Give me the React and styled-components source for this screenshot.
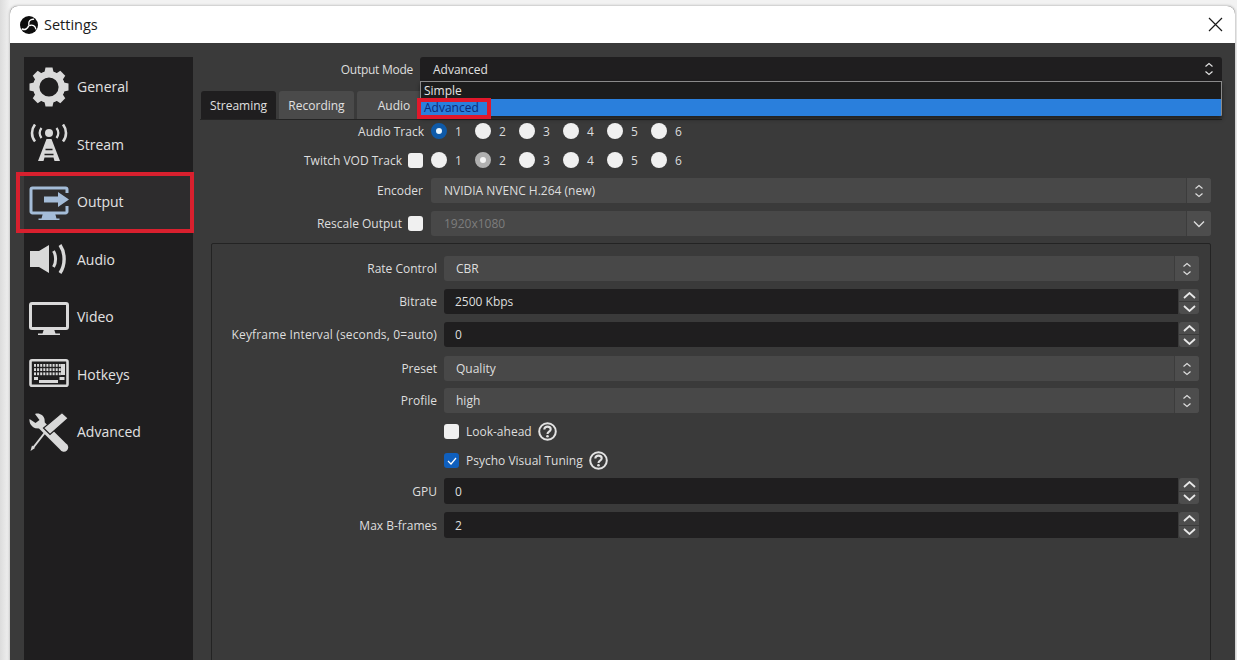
import React from "react";
import styled, { createGlobalStyle } from "styled-components";

const Global = createGlobalStyle`
  html, body { margin: 0; padding: 0; height: 660px; overflow: hidden; background: #f4f4f4; }
  #root { height: 660px; overflow: hidden; }
  * { box-sizing: border-box; }
`;

const FONT = `"Open Sans", "Noto Sans", sans-serif`;

const Desktop = styled.div`
  height: 660px;
  padding: 6px 2px 0 10px;
  font-family: ${FONT};
  background: linear-gradient(90deg, #dcdcdc 0, #f2f2f2 10px);
`;
const Window = styled.div`
  height: 700px;
  display: flex;
  flex-direction: column;
  background: #3a3a3a;
  border-radius: 8px 8px 0 0;
  box-shadow: 0 0 3px rgba(0, 0, 0, 0.35);
  overflow: hidden;
`;
const TitleBar = styled.div`
  height: 37px;
  flex: none;
  background: #fff;
  display: flex;
  align-items: center;
  padding: 0 12px 0 10px;
  gap: 6px;
  color: #1a1a1a;
  font-size: 14.5px;
`;
const TitleText = styled.span`
  flex: 1;
  line-height: 37px;
`;
const Body = styled.div`
  flex: 1;
  display: flex;
  gap: 7px;
  padding: 14px 13px 0 14px;
  min-height: 0;
`;
const Sidebar = styled.nav`
  width: 169px;
  flex: none;
  background: #1f1e1f;
  padding-top: 1px;
`;
const NavItem = styled.div`
  position: relative;
  height: 57.5px;
  display: flex;
  align-items: center;
  gap: 8px;
  padding-left: 5px;
  font-size: 14px;
  line-height: 20px;
  color: #e2e2e2;
  background: ${(p) => (p.$active ? "#2d2c2d" : "transparent")};
  svg { flex: none; }
`;
const NavLabel = styled.span`
  padding-top: 1px;
`;
const Highlight = styled.span`
  position: absolute;
  left: -8px;
  right: -1px;
  top: -1px;
  bottom: -2px;
  border: 4px solid #d8202e;
  pointer-events: none;
`;
const Main = styled.main`
  flex: 1;
  min-width: 0;
  display: flex;
  flex-direction: column;
`;
const OutputRow = styled.div`
  display: grid;
  grid-template-columns: 213px 1fr;
  gap: 7px;
  align-items: center;
  height: 24px;
`;
const Label = styled.label`
  display: flex;
  justify-content: flex-end;
  align-items: center;
  gap: 6px;
  padding-right: ${(p) => p.$inset || 0}px;
  font-size: 12px;
  letter-spacing: ${(p) => p.$spacing || 0}px;
  color: #dedede;
  white-space: nowrap;
`;
const ComboHolder = styled.div`
  position: relative;
  height: 24px;
`;
const ModeCombo = styled.div`
  height: 24px;
  background: #1f1e1f;
  border-radius: 3px 3px 0 0;
  display: flex;
  align-items: center;
  justify-content: space-between;
  padding: 0 8px 0 13px;
  font-size: 12px;
  color: #e0e0e0;
`;
const Dropdown = styled.div`
  position: absolute;
  top: 24px;
  left: 0;
  right: 0;
  height: 35px;
  border: 1px solid #8a8a8a;
  border-bottom-color: #555;
  background: #1c1c1c;
  box-shadow: 0 3px 4px rgba(0, 0, 0, 0.45);
  z-index: 3;
`;
const Option = styled.div`
  position: relative;
  height: 17px;
  line-height: 17px;
  padding-left: 3px;
  font-size: 12px;
  color: ${(p) => (p.$selected ? "#0b2a78" : "#e4e4e4")};
  background: ${(p) => (p.$selected ? "#2a7fdc" : "transparent")};
`;
const OptionMark = styled.span`
  position: absolute;
  left: -4px;
  top: -1px;
  width: 74px;
  height: 21px;
  border: 4px solid #e0182b;
`;
const TabBar = styled.div`
  display: flex;
  gap: 3px;
  height: 29px;
  margin-top: 10px;
  padding-left: 1px;
  border-bottom: 1px solid #242424;
`;
const Tab = styled.div`
  width: ${(p) => p.$w}px;
  height: 28px;
  border-radius: 3px 3px 0 0;
  display: flex;
  align-items: center;
  justify-content: center;
  font-size: 12px;
  color: #e0e0e0;
  background: ${(p) => (p.$active ? "#1f1e1f" : "#4a4a4a")};
`;
const Panel = styled.div`
  padding: 0 11px;
  display: flex;
  flex-direction: column;
`;
const TopRow = styled.div`
  display: grid;
  grid-template-columns: 214px 1fr;
  gap: 6px;
  align-items: center;
  height: ${(p) => p.$h}px;
  margin-bottom: ${(p) => p.$mb || 7}px;
`;
const Radios = styled.div`
  display: flex;
`;
const RadioItem = styled.div`
  width: 44px;
  flex: none;
  display: flex;
  align-items: center;
  gap: 8px;
  font-size: 12px;
  color: #dcdcdc;
`;
const Radio = styled.span`
  width: 16px;
  height: 16px;
  border-radius: 50%;
  flex: none;
  background: ${(p) => (p.$state === "on" ? "#e8f6ff" : p.$state === "disabled" ? "#f4f4f4" : "#f0f0f0")};
  border: ${(p) =>
    p.$state === "on" ? "5px solid #0f5aa8" : p.$state === "disabled" ? "5px solid #b0b0b0" : "0 solid transparent"};
`;
const Check = styled.span`
  width: 15px;
  height: 15px;
  flex: none;
  border-radius: 3px;
  display: inline-flex;
  align-items: center;
  justify-content: center;
  background: ${(p) => (p.$on ? "#0f5fbd" : "#f0f0f0")};
`;
const Select = styled.div`
  height: 25px;
  display: flex;
  border-radius: 3px;
  overflow: hidden;
  font-size: 12px;
  background: #484848;
  color: ${(p) => (p.$disabled ? "#7d7d7d" : "#dedede")};
`;
const Value = styled.div`
  flex: 1;
  display: flex;
  align-items: center;
  padding-left: ${(p) => p.$pad || 12}px;
`;
const Arrow = styled.div`
  width: 25px;
  flex: none;
  margin-left: 1px;
  display: flex;
  align-items: center;
  justify-content: center;
  background: #4d4d4d;
  border-left: 1px solid #3c3c3c;
  color: #dcdcdc;
`;
const Group = styled.section`
  border: 1px solid #232323;
  padding: 12px 11px 12px 12px;
  display: flex;
  flex-direction: column;
  min-height: 440px;
  border-radius: 2px;
`;
const GroupRow = styled.div`
  display: grid;
  grid-template-columns: 213px 1fr;
  gap: 7px;
  align-items: center;
  height: ${(p) => p.$h || 25}px;
  margin-bottom: ${(p) => p.$mb || 8}px;
`;
const Spin = styled.div`
  height: 100%;
  display: flex;
  font-size: 12px;
  color: #dedede;
`;
const SpinInput = styled.div`
  flex: 1;
  display: flex;
  align-items: center;
  padding-left: 11px;
  background: #1f1e1f;
  border-radius: 3px 0 0 3px;
`;
const SpinButtons = styled.div`
  width: 20px;
  margin-left: 1px;
  flex: none;
  display: flex;
  flex-direction: column;
  gap: 1px;
`;
const SpinButton = styled.div`
  flex: 1;
  background: #4d4d4d;
  color: #e8e8e8;
  display: flex;
  align-items: center;
  justify-content: center;
  border-radius: ${(p) => (p.$up ? "3px 3px 0 0" : "0 0 3px 3px")};
`;
const CheckLine = styled.div`
  display: flex;
  align-items: center;
  gap: 7px;
  font-size: 12px;
  color: #dedede;
`;
const Help = styled.span`
  display: inline-flex;
  margin-left: -1px;
  color: #e2e2e2;
`;

const UpDown = () => (
  <svg width="10" height="14" viewBox="0 0 10 14" fill="none" stroke="currentColor" strokeWidth="1.2">
    <path d="M1.500 4.500 5 1.500l3.500 3M1.500 9.500 5 12.500l3.500-3" />
  </svg>
);
const Down = () => (
  <svg width="12" height="8" viewBox="0 0 12 8" fill="none" stroke="currentColor" strokeWidth="1.4">
    <path d="M1 1.500 6 6.500l5-5" />
  </svg>
);
const SpinChevron = ({ up }) => (
  <svg width="13" height="7" viewBox="0 0 13 7" fill="none" stroke="currentColor" strokeWidth="1.8">
    <path d={up ? "M1 6 6.500 1 12 6" : "M1 1l5.500 5L12 1"} />
  </svg>
);
const Tick = () => (
  <svg width="10" height="8" viewBox="0 0 10 8" fill="none" stroke="#fff" strokeWidth="1.2">
    <path d="M1 4l3 3 5-6" />
  </svg>
);
const HelpIcon = () => (
  <svg width="19" height="19" viewBox="0 0 19 19" fill="none" stroke="currentColor">
    <circle cx="9.500" cy="9.500" r="8.300" strokeWidth="2" />
    <path d="M6.300 7.600c0-1.900 1.400-3 3.200-3s3.200 1.100 3.200 2.700c0 2.400-3.200 2.300-3.200 4.600" strokeWidth="2.100" />
    <circle cx="9.500" cy="14.300" r="1.300" fill="currentColor" stroke="none" />
  </svg>
);

const ObsLogo = () => (
  <svg width="18" height="18" viewBox="0 0 18 18">
    <circle cx="9" cy="9" r="9" fill="#0d0d0d" />
    <g fill="none" stroke="#fff" strokeWidth="1.400" strokeLinecap="round">
      <path d="M8.800 8.500C8.200 5.500 10.300 3 13.500 3.200" />
      <path d="M9.700 9.500c2.900-1 5.500.3 6 3.200" />
      <path d="M8.500 10c-.8 2.800-3.500 4.200-6.200 3" />
    </g>
  </svg>
);

const C = "#d9d9d9";
const D = "#1f1e1f";
const GearIcon = () => (
  <svg width="40" height="40" viewBox="0 0 40 40">
    <g fill={C}>
      {[0, 45, 90, 135, 180, 225, 270, 315].map((a) => (
        <path key={a} d="M16.500 0.500h7l1.500 7h-10z" transform={`rotate(${a} 20 20)`} />
      ))}
    </g>
    <circle cx="20" cy="20" r="12.800" fill="none" stroke={C} strokeWidth="6.400" />
  </svg>
);
const StreamIcon = () => (
  <svg width="40" height="40" viewBox="0 0 40 40" fill="none" stroke={C}>
    <circle cx="20" cy="9" r="4" fill={C} stroke="none" />
    <path d="M12.500 4c-2.200 3-2.200 7 0 10M27.500 4c2.200 3 2.200 7 0 10" strokeWidth="2.200" />
    <path d="M6 0.500c-4 5-4 12 0 17M34 0.500c4 5 4 12 0 17" strokeWidth="2.600" />
    <path d="M17.500 15 9 37h5.500l1-3.500h9l1 3.500H31l-8.500-22z" fill={C} stroke="none" />
    <path d="M16.500 25.500h7M15.500 30.500h9" stroke={D} strokeWidth="1.600" />
  </svg>
);
const OutputIcon = () => (
  <svg width="40" height="40" viewBox="0 0 40 40" fill="none">
    <path d="M38 11V7.500A1.500 1.500 0 0 0 36.500 6H3.500A1.500 1.500 0 0 0 2 7.500v22A1.500 1.500 0 0 0 3.500 31h33a1.500 1.500 0 0 0 1.500-1.500V24" stroke="#a4bcd8" strokeWidth="3" />
    <path d="M14 31h12l1.500 5.500h3V38h-21v-1.500h3z" fill="#a4bcd8" />
    <path d="M15 14.500h14V10l11 7.500L29 25v-4.500H15z" fill="#a4bcd8" />
  </svg>
);
const AudioIcon = () => (
  <svg width="40" height="40" viewBox="0 0 40 40" fill="none">
    <path d="M1 12h9L20 6v28L10 28H1z" fill={C} />
    <path d="M24.500 12c2.800 4.500 2.800 11.500 0 16" stroke={C} strokeWidth="3" />
    <path d="M31 6c5.500 8 5.500 20 0 28" stroke={C} strokeWidth="3.400" />
  </svg>
);
const VideoIcon = () => (
  <svg width="40" height="40" viewBox="0 0 40 40" fill="none">
    <rect x="1.500" y="6.500" width="37" height="25" rx="1.500" stroke={C} strokeWidth="3" />
    <path d="M15 32h10l1.500 4.500H31V38H9v-1.500h4.500z" fill={C} />
  </svg>
);
const HotkeyIcon = () => {
  const keys = [];
  for (let r = 0; r < 3; r++) {
    for (let i = 0; i < 9; i++) keys.push(<rect key={`${r}-${i}`} x={5 + i * 3.1} y={10 + r * 4.2} width="2" height="2.800" />);
  }
  return (
    <svg width="40" height="40" viewBox="0 0 40 40" fill="none">
      <rect x="1.500" y="6.300" width="37" height="25.500" rx="1.500" stroke={C} strokeWidth="2.600" />
      <g fill={C}>
        {keys}
        <rect x="32" y="10" width="4" height="11" />
        <rect x="5" y="23" width="4" height="3" />
        <rect x="10" y="26" width="19" height="3" />
        <rect x="30.500" y="23" width="5" height="3" />
      </g>
    </svg>
  );
};
const AdvancedIcon = () => (
  <svg width="40" height="40" viewBox="0 0 40 40" fill="none">
    <path d="M6 2c4-1.500 8.500 1 9.500 5l.3 3.500L37 31.500a4.400 4.400 0 1 1-6 6L10 16.500l-3.500-.3C2.500 15 0 11 .5 7l6 4 4-3z" fill={C} />
    <path d="M33 .6 39.300 6.300 21 22.500 14.500 16z" fill={C} stroke={D} strokeWidth="1.200" />
    <path d="M16 20.500 3.500 36.500" stroke={C} strokeWidth="2" />
    <path d="M1.500 39 3 33.500 6 36z" fill={C} />
  </svg>
);

const NAV = [
  ["General", GearIcon],
  ["Stream", StreamIcon],
  ["Output", OutputIcon],
  ["Audio", AudioIcon],
  ["Video", VideoIcon],
  ["Hotkeys", HotkeyIcon],
  ["Advanced", AdvancedIcon],
];

const RadioSet = ({ states }) => (
  <Radios>
    {states.map((s, i) => (
      <RadioItem key={i}>
        <Radio $state={s} />
        {i + 1}
      </RadioItem>
    ))}
  </Radios>
);

const SelectBox = ({ value, disabled, down, pad }) => (
  <Select $disabled={disabled}>
    <Value $pad={pad}>{value}</Value>
    <Arrow>{down ? <Down /> : <UpDown />}</Arrow>
  </Select>
);
const SpinBox = ({ value }) => (
  <Spin>
    <SpinInput>{value}</SpinInput>
    <SpinButtons>
      <SpinButton $up><SpinChevron up /></SpinButton>
      <SpinButton><SpinChevron /></SpinButton>
    </SpinButtons>
  </Spin>
);

export default function App() {
  return (
    <Desktop>
      <Global />
      <Window>
        <TitleBar>
          <ObsLogo />
          <TitleText>Settings</TitleText>
          <svg width="15" height="15" viewBox="0 0 15 15" stroke="#1a1a1a" strokeWidth="1.2">
            <path d="M1 1l13 13M14 1 1 14" />
          </svg>
        </TitleBar>
        <Body>
          <Sidebar>
            {NAV.map(([name, Icon]) => (
              <NavItem key={name} $active={name === "Output"}>
                <Icon />
                <NavLabel>{name}</NavLabel>
                {name === "Output" && <Highlight />}
              </NavItem>
            ))}
          </Sidebar>
          <Main>
            <OutputRow>
              <Label $spacing={-0.27}>Output Mode</Label>
              <ComboHolder>
                <ModeCombo>
                  Advanced
                  <UpDown />
                </ModeCombo>
                <Dropdown>
                  <Option>Simple</Option>
                  <Option $selected>
                    Advanced
                    <OptionMark />
                  </Option>
                </Dropdown>
              </ComboHolder>
            </OutputRow>
            <TabBar>
              <Tab $active $w={75}>Streaming</Tab>
              <Tab $w={75}>Recording</Tab>
              <Tab $w={74}>Audio</Tab>
            </TabBar>
            <Panel>
              <TopRow $h={22}>
                <Label $inset={1}>Audio Track</Label>
                <RadioSet states={["on", "off", "off", "off", "off", "off"]} />
              </TopRow>
              <TopRow $h={22}>
                <Label $inset={2}>Twitch VOD Track<Check /></Label>
                <RadioSet states={["off", "disabled", "off", "off", "off", "off"]} />
              </TopRow>
              <TopRow $h={25} $mb={8}>
                <Label $inset={2}>Encoder</Label>
                <SelectBox value="NVIDIA NVENC H.264 (new)" pad={13} />
              </TopRow>
              <TopRow $h={25}>
                <Label $inset={2}>Rescale Output<Check /></Label>
                <SelectBox value="1920x1080" disabled down pad={13} />
              </TopRow>
              <Group>
                <GroupRow><Label>Rate Control</Label><SelectBox value="CBR" /></GroupRow>
                <GroupRow><Label>Bitrate</Label><SpinBox value="2500 Kbps" /></GroupRow>
                <GroupRow $mb={9}><Label $spacing={0.14}>Keyframe Interval (seconds, 0=auto)</Label><SpinBox value="0" /></GroupRow>
                <GroupRow $mb={7}><Label>Preset</Label><SelectBox value="Quality" /></GroupRow>
                <GroupRow><Label>Profile</Label><SelectBox value="high" /></GroupRow>
                <GroupRow $h={21}>
                  <span />
                  <CheckLine><Check />Look-ahead<Help><HelpIcon /></Help></CheckLine>
                </GroupRow>
                <GroupRow $h={21} $mb={7}>
                  <span />
                  <CheckLine><Check $on><Tick /></Check>Psycho Visual Tuning<Help><HelpIcon /></Help></CheckLine>
                </GroupRow>
                <GroupRow $h={26}><Label>GPU</Label><SpinBox value="0" /></GroupRow>
                <GroupRow $h={26}><Label>Max B-frames</Label><SpinBox value="2" /></GroupRow>
              </Group>
            </Panel>
          </Main>
        </Body>
      </Window>
    </Desktop>
  );
}
